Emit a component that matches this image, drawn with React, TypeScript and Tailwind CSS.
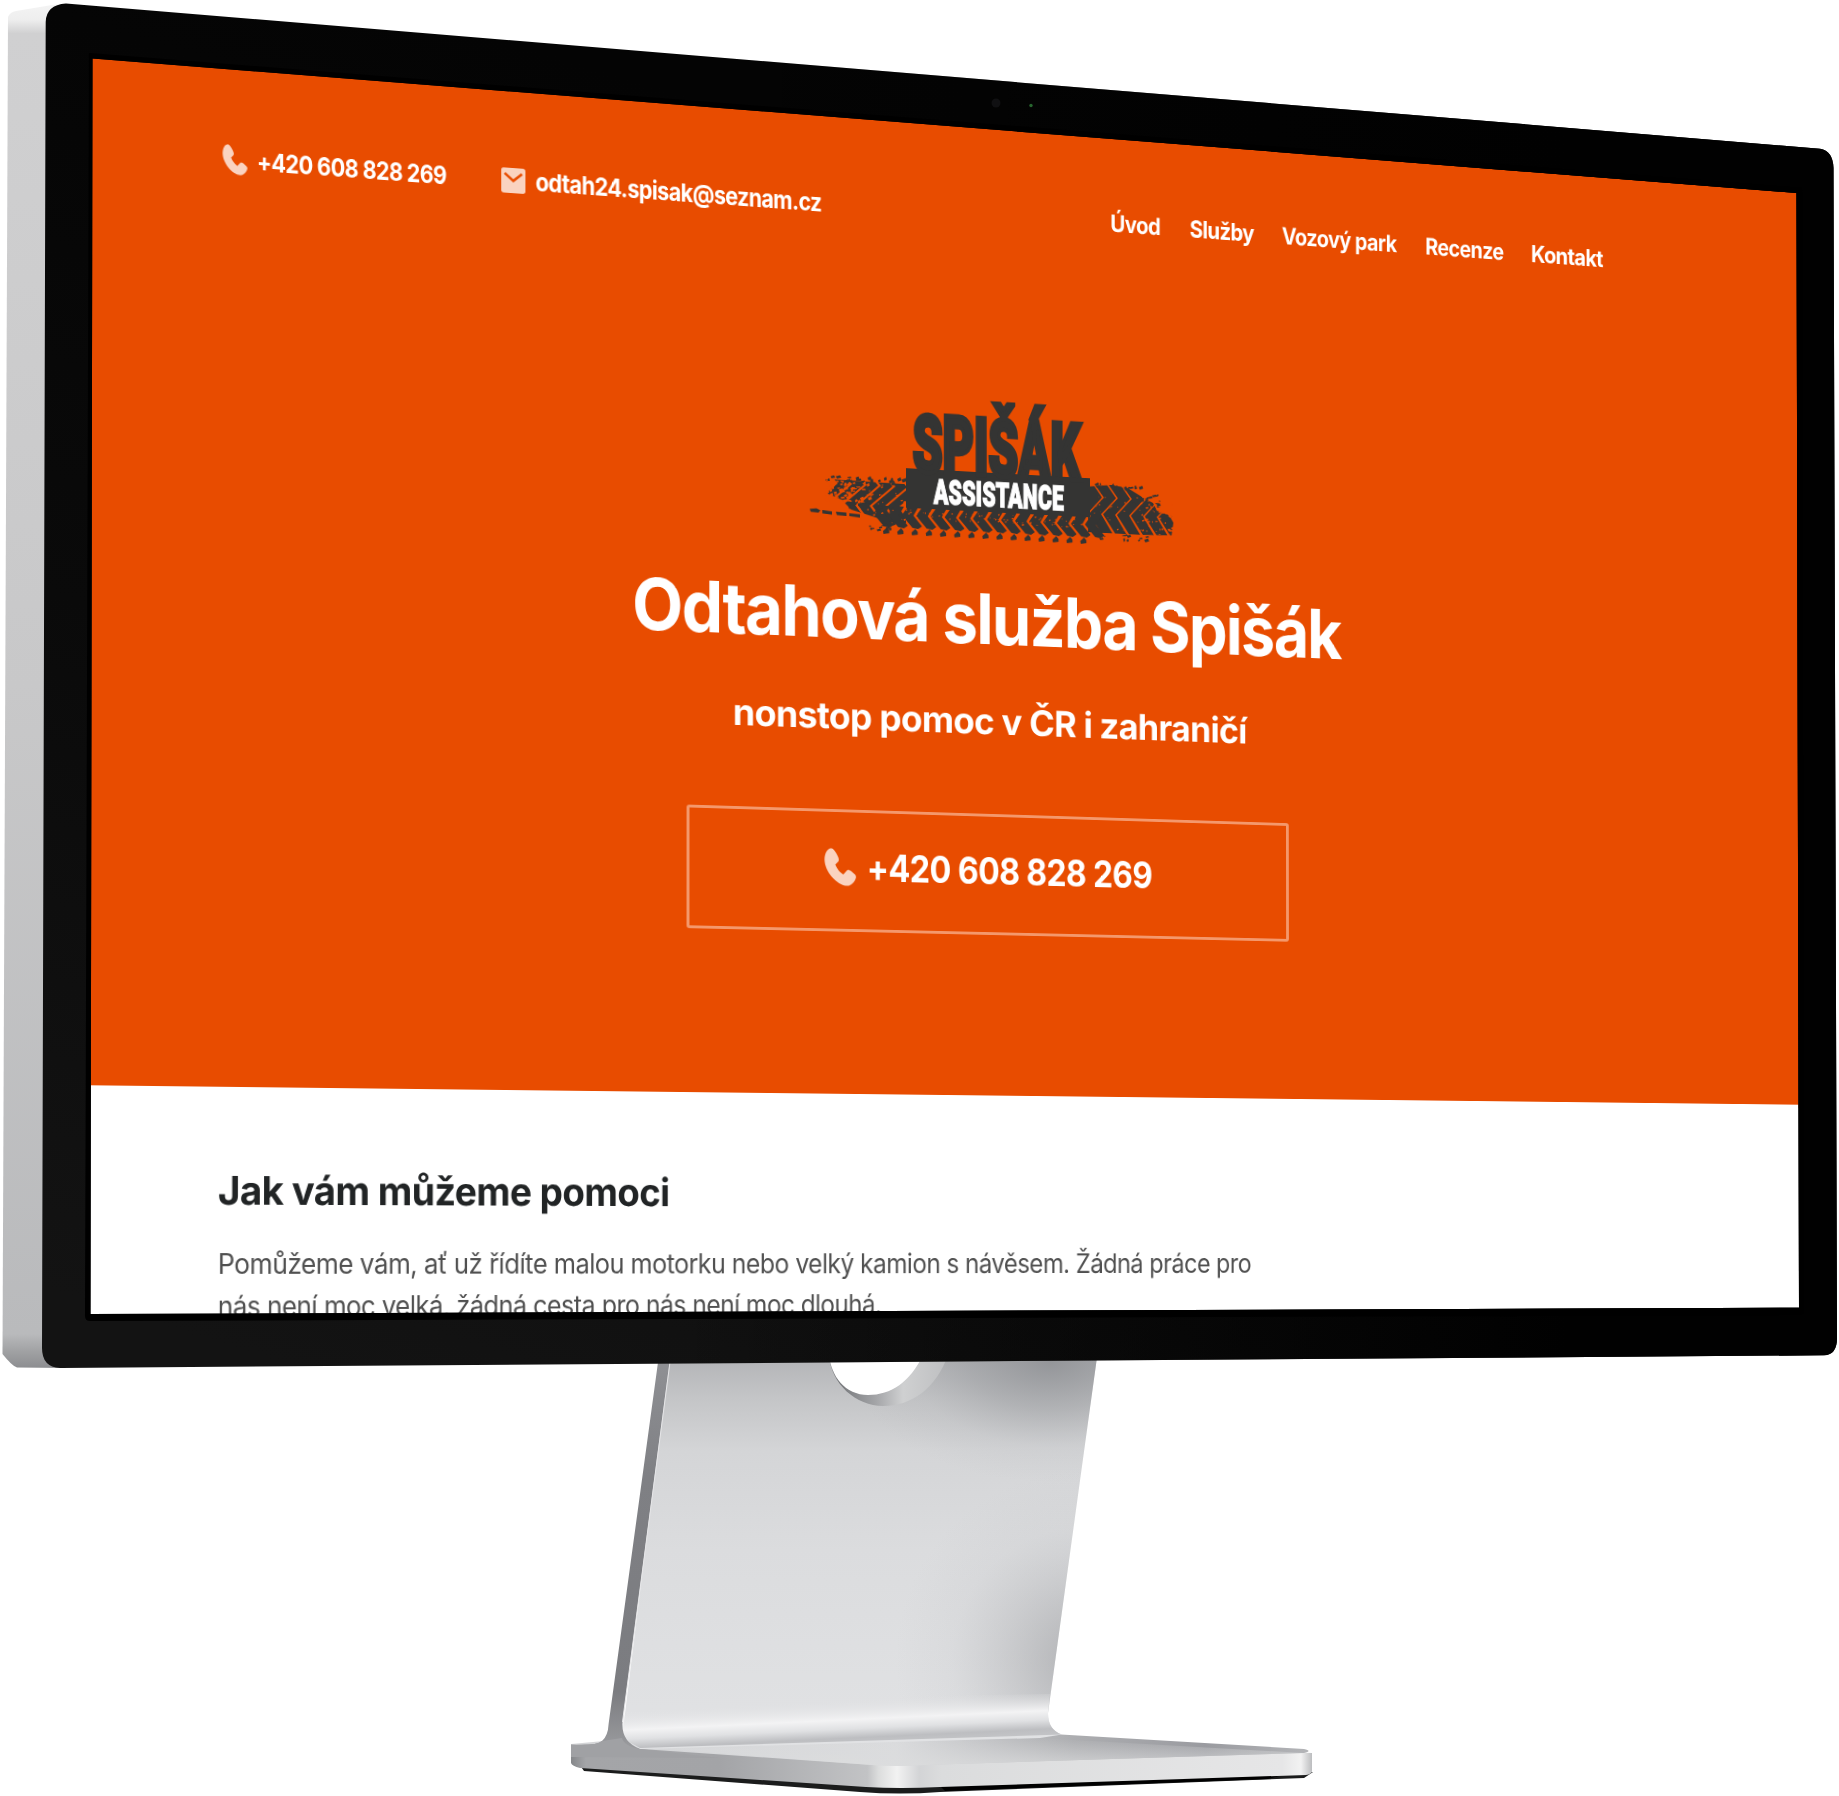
import { useLayoutEffect, useRef, useState, type ReactNode } from "react";

/* Text set on one line and condensed horizontally to the given width. */
function Fit({ width, className = "", children }: { width: number; className?: string; children: ReactNode }) {
  const ref = useRef<HTMLSpanElement>(null);
  const [scale, setScale] = useState(1);
  useLayoutEffect(() => {
    if (ref.current) setScale(width / ref.current.offsetWidth);
  }, [width]);
  return (
    <span className="block shrink-0" style={{ width }}>
      <span
        ref={ref}
        className={"inline-block origin-left whitespace-nowrap " + className}
        style={{ transform: `scaleX(${scale})` }}
      >
        {children}
      </span>
    </span>
  );
}

function PhoneIcon({ className }: { className: string }) {
  return (
    <svg viewBox="0 0 24 31" preserveAspectRatio="none" className={className} fill="#fad3c0">
      <path d="M1.6 3.2C2.6 1.2 4.4.2 5.6.4 7 .6 8.400 3 9.600 5.400c1.300 2.600 1.700 4.400.9 5.700L8.300 13.600c1.200 3.300 3.400 6.100 6 8l2.500-3.200c.8-1 2-.9 3.300.1l2.900 2.700c1.200 1.200 1.100 2.600.3 4.300-1.300 2.900-3.400 5-6 5.200C8.900 30.300.4 19.300.2 9.700.2 7.100.7 4.900 1.600 3.200Z" />
    </svg>
  );
}

function MailIcon({ className }: { className: string }) {
  return (
    <svg viewBox="0 0 24 25" preserveAspectRatio="none" className={className}>
      <rect width="24" height="25" rx="2.600" fill="#fad3c0" />
      <path d="M3.400 5.600 12 12.700 20.600 5.600" fill="none" stroke="#e84c00" strokeWidth="2.500" />
    </svg>
  );
}

function specks(seed: number, count: number, x: number, y: number, w: number, h: number, size: number) {
  let s = seed;
  const next = () => (s = (s * 16807) % 2147483647) / 2147483647;
  for (let i = 0; i < 5; i++) next();
  return Array.from({ length: count }, () => {
    const px = x + next() * w;
    const py = y + next() * h;
    const a = size * (0.4 + next());
    const b = size * (0.3 + next() * 0.7);
    return `M${px.toFixed(1)} ${py.toFixed(1)}l${a.toFixed(1)} ${(-b * 0.6).toFixed(1)}l${(a * 0.3).toFixed(1)} ${b.toFixed(1)}l${(-a).toFixed(1)} ${(b * 0.5).toFixed(1)}z`;
  }).join("");
}

function Logo() {
  const right = [284, 299, 314, 329, 344, 359, 374];
  const left = [22, 37, 52, 67, 82, 97];
  const bottom = Array.from({ length: 16 }, (_, i) => 72 + i * 14.9);
  return (
    <svg viewBox="0 0 387 144" className="h-[144px] w-[387px] overflow-visible">
      <defs>
        <clipPath id="treadRight">
          <path d="M294 84 318 81 336 83 352 92 364 98 368 106 387 112 384 132 352 133 294 136Z" />
        </clipPath>
        <clipPath id="treadLeft">
          <path d="M14 98 24 91 101 92 101 134 84 133 66 128 44 122 34 112 18 106Z" />
        </clipPath>
      </defs>
      <g fill="#343433">
        <g clipPath="url(#treadRight)">
          {right.map((x) => (
            <path key={x} d={`M${x} 78l12 17-16 18 13 20h12l-12-20 16-18-12-17z`} />
          ))}
        </g>
        <g clipPath="url(#treadLeft)">
          {left.map((x) => (
            <path key={x} d={`M${x} 86l8 9-24 22 12 16h12l-12-16 24-22-8-9z`} />
          ))}
        </g>
        {bottom.map((x, i) => (
          <g key={x}>
            <path d={`M${x + 1} 116h11l-5 9 9 11-4 3-6-1-11-13z`} />
            {i < 15 && <path d={`M${x + 5} 143l4-4 2.500 3v3l-6 1z`} />}
          </g>
        ))}
        <path d="M1 123.500l7-1 4 2-2 2.500-8-.5zM14 124l10 1v3.500l-10-1zM28 125l11 .5v3.500l-10-.5zM42 126l11 .5v3.500l-11-1z" />
        <path d={specks(11, 26, 15, 87, 88, 5, 3.2)} />
        <path d={specks(47, 18, 34, 106, 40, 14, 3)} />
        <path d={specks(91, 14, 62, 130, 26, 12, 3)} />
        <path d={specks(23, 22, 300, 80, 55, 5, 3)} />
        <path d={specks(35, 16, 340, 88, 42, 18, 3)} />
        <path d={specks(77, 14, 296, 134, 60, 8, 3)} />
      </g>
      <g fill="#e84c00">
        <path d={specks(5, 70, 14, 92, 50, 22, 3)} />
        <path d={specks(19, 24, 60, 94, 40, 36, 1.6)} />
        <path d={specks(61, 70, 100, 119, 190, 10, 1.5)} />
        <path d={specks(83, 46, 350, 96, 36, 36, 2)} />
        <path d={specks(29, 20, 300, 90, 50, 40, 1.300)} />
      </g>
      <path fill="#343433" d="M101 75 296 75 296 117 101 117Z" />
      <text
        x="108"
        y="78"
        textLength="178"
        lengthAdjust="spacingAndGlyphs"
        className="font-['Roboto'] text-[85px] font-black"
        fill="#343433"
        stroke="#343433"
        strokeWidth="5"
      >
        SPIŠÁK
      </text>
      <text
        x="130"
        y="111.500"
        textLength="138"
        lengthAdjust="spacingAndGlyphs"
        className="font-['Roboto'] text-[37.500px] font-black"
        fill="#ffffff"
        stroke="#ffffff"
        strokeWidth="1.300"
      >
        ASSISTANCE
      </text>
    </svg>
  );
}

function Stand() {
  return (
    <svg viewBox="0 0 1839 1796" className="absolute inset-0 h-[1796px] w-[1839px]">
      <defs>
        <linearGradient id="neck" gradientUnits="userSpaceOnUse" x1="0" y1="1360" x2="0" y2="1740">
          <stop offset="0" stopColor="#b4b5b8" />
          <stop offset=".1" stopColor="#c4c5c7" />
          <stop offset=".24" stopColor="#d4d5d7" />
          <stop offset=".5" stopColor="#dbdcde" />
          <stop offset="1" stopColor="#e1e2e4" />
        </linearGradient>
        <radialGradient id="neckShade" gradientUnits="userSpaceOnUse" cx="1050" cy="1362" r="200" gradientTransform="translate(0 545) scale(1 .6)">
          <stop offset="0" stopColor="#86888c" stopOpacity=".7" />
          <stop offset=".4" stopColor="#8c8e92" stopOpacity=".36" />
          <stop offset=".7" stopColor="#9c9ea2" stopOpacity=".1" />
          <stop offset="1" stopColor="#a4a5a8" stopOpacity="0" />
        </radialGradient>
        <radialGradient id="neckShade2" gradientUnits="userSpaceOnUse" cx="1085" cy="1660" r="190">
          <stop offset="0" stopColor="#a0a1a4" stopOpacity=".75" />
          <stop offset=".35" stopColor="#a4a5a8" stopOpacity=".4" />
          <stop offset=".7" stopColor="#b0b1b4" stopOpacity=".1" />
          <stop offset="1" stopColor="#b4b5b8" stopOpacity="0" />
        </radialGradient>
        <linearGradient id="edge" gradientUnits="userSpaceOnUse" x1="0" y1="1360" x2="0" y2="1750">
          <stop offset="0" stopColor="#8f9094" />
          <stop offset=".3" stopColor="#7f8084" />
          <stop offset=".85" stopColor="#7b7c80" />
          <stop offset="1" stopColor="#9b9c9f" />
        </linearGradient>
        <linearGradient id="fold" gradientUnits="userSpaceOnUse" x1="830" y1="1700" x2="832.500" y2="1754">
          <stop offset="0" stopColor="#dfe0e2" stopOpacity="0" />
          <stop offset=".38" stopColor="#f3f3f4" />
          <stop offset=".55" stopColor="#e0e1e3" />
          <stop offset=".72" stopColor="#bdbec1" />
          <stop offset="1" stopColor="#cbccce" />
        </linearGradient>
        <linearGradient id="baseTop" gradientUnits="userSpaceOnUse" x1="620" y1="0" x2="1310" y2="0">
          <stop offset="0" stopColor="#d4d5d7" />
          <stop offset=".4" stopColor="#dadbdd" />
          <stop offset=".66" stopColor="#acadb0" />
          <stop offset=".85" stopColor="#9a9ba0" />
          <stop offset="1" stopColor="#b4b5b8" />
        </linearGradient>
        <linearGradient id="baseTopLight" gradientUnits="userSpaceOnUse" x1="0" y1="1738" x2="0" y2="1764">
          <stop offset="0" stopColor="#dcddde" stopOpacity="0" />
          <stop offset="1" stopColor="#dcddde" stopOpacity=".7" />
        </linearGradient>
        <linearGradient id="baseFront" gradientUnits="userSpaceOnUse" x1="571" y1="0" x2="1312" y2="0">
          <stop offset="0" stopColor="#85878a" />
          <stop offset=".02" stopColor="#a4a5a8" />
          <stop offset=".2" stopColor="#a3a4a7" />
          <stop offset=".4" stopColor="#c2c3c5" />
          <stop offset=".415" stopColor="#dcdddd" />
          <stop offset=".44" stopColor="#f2f2f2" />
          <stop offset=".47" stopColor="#d3d4d6" />
          <stop offset=".5" stopColor="#dbdcdd" />
          <stop offset=".96" stopColor="#e6e6e7" />
          <stop offset=".985" stopColor="#f2f2f2" />
          <stop offset="1" stopColor="#bcbdbf" />
        </linearGradient>
        <linearGradient id="rim" gradientUnits="userSpaceOnUse" x1="840" y1="0" x2="945" y2="0">
          <stop offset="0" stopColor="#77797c" />
          <stop offset=".35" stopColor="#a5a6a9" />
          <stop offset=".6" stopColor="#cfd0d1" />
          <stop offset="1" stopColor="#bfc0c2" />
        </linearGradient>
      </defs>

      {/* base */}
      <path d="M579 1764 584 1771 860 1792Q900 1795 940 1792L1304 1778 1313 1772 900 1770Z" fill="#1b1c1c" />
      <path d="M940 1786 1290 1773 1268 1779 945 1791Z" fill="#000" />
      <path d="M571 1745 571 1763Q572 1766 580 1768L866 1787Q900 1789 940 1787L1306 1775Q1312 1774 1312 1771L1312 1753 900 1740Z" fill="url(#baseFront)" />
      <path d="M571 1744 604 1741 1061 1734.500 1304 1749Q1313 1751 1304 1753L925 1765Q900 1767 872 1765L627 1748Z" fill="url(#baseTop)" />
      <path d="M627 1746 1040 1738 1304 1753 925 1765Q900 1767 872 1765Z" fill="url(#baseTopLight)" />

      {/* neck */}
      <path d="M669 1355H1097.300L1048 1713Q1048 1730 1062 1734.500L1040 1738 640 1749 622 1738Z" fill="url(#neck)" />
      <path d="M669 1355H1097.300L1048 1713 622 1730Z" fill="url(#neckShade)" />
      <path d="M669 1355H1097.300L1048 1713 622 1730Z" fill="url(#neckShade2)" />
      <path d="M622 1700 1050 1694 1048 1713Q1048 1730 1062 1734.500L640 1748 622 1738Z" fill="url(#fold)" />
      <path d="M659 1355H670.500L622.500 1722Q621 1742 640 1749L571 1757V1744.500Q596 1746 602 1741 608 1736 608.600 1724Z" fill="url(#edge)" />
      <path d="M571 1744.500Q596 1746 602 1741L622 1738Q624 1746 640 1749L720 1758 571 1757Z" fill="#a0a1a4" />
      <path d="M670 1362 622.500 1722" stroke="#e6e6e8" strokeWidth="1" />
      <path d="M829 1355C831 1384 856 1406 883 1406 912 1406 936 1388 948 1355Z" fill="url(#rim)" />
      <path d="M829 1355C831 1376 845 1395 868 1395 891 1395 910 1382 923 1355Z" fill="#fff" />
    </svg>
  );
}

/* Housing and glass border; the centre is left open for the page. */
function Frame() {
  return (
    <svg viewBox="0 0 1839 1796" className="pointer-events-none absolute inset-0 h-[1796px] w-[1839px]">
      <defs>
        <linearGradient id="side" x1="0" y1="0" x2="0" y2="1">
          <stop offset="0" stopColor="#f4f4f4" />
          <stop offset=".012" stopColor="#eeeeee" />
          <stop offset=".022" stopColor="#d0d0d1" />
          <stop offset=".5" stopColor="#c8c8c9" />
          <stop offset=".975" stopColor="#b9babc" />
          <stop offset=".988" stopColor="#a0a1a3" />
          <stop offset="1" stopColor="#8c8d90" />
        </linearGradient>
        <linearGradient id="bezel" gradientUnits="userSpaceOnUse" x1="300" y1="1369" x2="700" y2="100">
          <stop offset="0" stopColor="#131313" />
          <stop offset=".5" stopColor="#0a0a0a" />
          <stop offset="1" stopColor="#040404" />
        </linearGradient>
        <linearGradient id="bezelRight" x1="0" y1="0" x2="1" y2="0">
          <stop offset=".35" stopColor="#010101" stopOpacity="0" />
          <stop offset=".85" stopColor="#010101" />
        </linearGradient>
      </defs>
      <path fillRule="evenodd" d="M8 17Q10 12 16 11L52 5 66 3.500 66 1368 17 1367.500Q12 1366 2.500 1354Z" fill="url(#side)" />
      <path
        fillRule="evenodd"
        d="M45.700 22Q46 5 66 3.500L1820 148.700Q1833 151 1833.500 168L1837 1338Q1837 1355 1824 1355.300L60 1368Q42 1367 42 1348ZM92.500 58.500 90.500 1314 1799 1307.700 1796.500 193Z"
        fill="url(#bezel)"
      />
      <path
        fillRule="evenodd"
        d="M45.700 22Q46 5 66 3.500L1820 148.700Q1833 151 1833.500 168L1837 1338Q1837 1355 1824 1355.300L60 1368Q42 1367 42 1348ZM92.500 58.500 90.500 1314 1799 1307.700 1796.500 193Z"
        fill="url(#bezelRight)"
      />
      <path fillRule="evenodd" d="M89 53 1802 188 1804 1313 1800 1315 90 1321Q85 1321 85 1316ZM92.500 58.500 90.500 1314 1799 1307.700 1796.500 193Z" fill="#000" />
      <circle cx="996" cy="103" r="4.500" fill="#101012" />
      <circle cx="1031" cy="105.500" r="1.700" fill="#27662f" />
    </svg>
  );
}

const links = [
  { label: "Úvod", width: 54 },
  { label: "Služby", width: 70 },
  { label: "Vozový park", width: 128 },
  { label: "Recenze", width: 89 },
  { label: "Kontakt", width: 83 },
];

function Page() {
  return (
    <div className="absolute left-0 top-0 h-[1260px] w-[1800px] origin-top-left bg-white font-['Inter',sans-serif] shadow-[0_0_0_4px_#ffffff] [transform:matrix3d(1.072722,0.0882644,0,0.000070167,-0.0017897,0.993492,0,-0.0000022373,0,0,1,0,92.5,58.5,0,1)]">
      <section className="flex h-[1031px] flex-col items-center bg-[#e84c00] text-white shadow-[0_0_0_4px_#e84c00]">
        <header className="flex h-[183px] w-full items-center justify-between pl-[123px] pr-[227px] text-[26px] font-bold leading-[40px] tracking-[-0.03em]">
          <div className="flex items-center">
            <PhoneIcon className="h-[31px] w-[24px]" />
            <div className="ml-[9px]"><Fit width={184}>+420 608 828 269</Fit></div>
            <MailIcon className="ml-[54px] h-[26px] w-[24px]" />
            <div className="ml-[10px]"><Fit width={290}>odtah24.spisak@seznam.cz</Fit></div>
          </div>
          <nav className="flex items-center gap-[31.500px] pb-[2px]">
            {links.map((l) => (
              <a key={l.label} href="#" className="block text-[25.500px]">
                <Fit width={l.width}>{l.label}</Fit>
              </a>
            ))}
          </nav>
        </header>
        <div className="mr-[4px] mt-[109px]"><Logo /></div>
        <h1 className="mt-[35px] text-[74px] font-bold leading-[104px] tracking-[-0.025em]">
          <Fit width={750}>Odtahová služba Spišák</Fit>
        </h1>
        <h2 className="mr-[2px] mt-[31px] text-[38px] font-bold leading-[52px] tracking-[-0.02em]">
          <Fit width={544}>nonstop pomoc v ČR i zahraničí</Fit>
        </h2>
        <a href="#" className="mr-[3px] mt-[73px] flex h-[129px] w-[637px] items-center justify-center rounded-[3px] border-[3px] border-[#f4986c] pb-[8px] pr-[8px] text-[39px] font-bold leading-[56px] tracking-[-0.02em]">
          <PhoneIcon className="h-[40px] w-[33px]" />
          <div className="ml-[11px]"><Fit width={303}>+420 608 828 269</Fit></div>
        </a>
      </section>
      <section className="relative h-[231px] bg-white px-[120px] pt-[80px]">
        <h2 className="text-[40px] font-bold leading-[50px] tracking-[-0.015em] text-[#212425]">
          <Fit width={443}>Jak vám můžeme pomoci</Fit>
        </h2>
        <div className="mt-[28px] text-[28px] leading-[43px] tracking-[-0.02em] text-[#505050]">
          <Fit width={1055}>Pomůžeme vám, ať už řídíte malou motorku nebo velký kamion s návěsem. Žádná práce pro</Fit>
          <Fit width={660}>nás není moc velká, žádná cesta pro nás není moc dlouhá.</Fit>
        </div>
      </section>
    </div>
  );
}

export default function App() {
  return (
    <main className="relative h-[1796px] w-[1839px] overflow-hidden bg-white">
      <Stand />
      <Page />
      <Frame />
    </main>
  );
}
